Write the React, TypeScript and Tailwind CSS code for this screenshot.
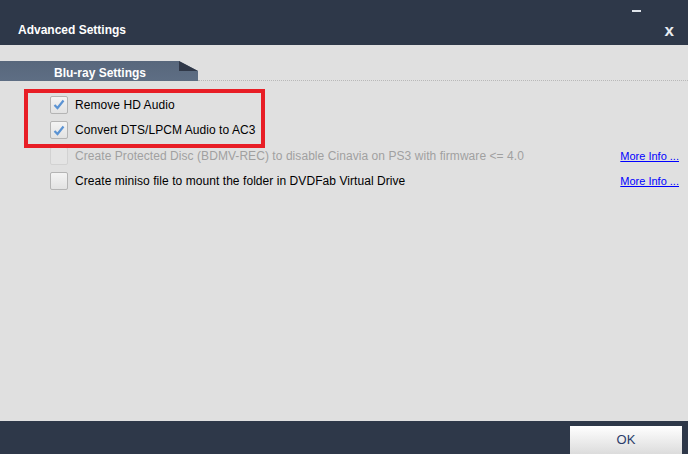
const font = { fontFamily: '"Liberation Sans", Arial, sans-serif' };

function Check({ checked, disabled }: { checked?: boolean; disabled?: boolean }) {
  return (
    <span
      className={
        "flex h-[18px] w-[18px] shrink-0 items-center justify-center rounded-[2px] border " +
        (disabled
          ? "border-[#d2d2d2] bg-[#e4e4e4]"
          : "border-[#b4b4b4] bg-gradient-to-b from-[#f4f4f4] to-[#e2e2e2]")
      }
    >
      {checked && (
        <svg width="12" height="11" viewBox="0 0 12 11">
          <path d="M1.5 6 L4.5 9 L10.5 1.5" fill="none" stroke="#5b93d3" strokeWidth="2.2" />
        </svg>
      )}
    </span>
  );
}

function Row({
  label,
  checked,
  disabled,
  more,
}: {
  label: string;
  checked?: boolean;
  disabled?: boolean;
  more?: boolean;
}) {
  return (
    <div className="flex h-[25.5px] items-center pl-[50px] pr-[9px]">
      <Check checked={checked} disabled={disabled} />
      <span
        className={
          "ml-[7px] text-[12px] tracking-[0.06px] " + (disabled ? "text-[#a0a0a0]" : "text-black")
        }
      >
        {label}
      </span>
      {more && <a className="ml-auto text-[11px] text-[#0000ff] underline">More Info ...</a>}
    </div>
  );
}

export default function App() {
  return (
    <div className="flex h-[454px] w-[688px] flex-col bg-[#e0e0e0]" style={font}>
      <div className="relative h-[45px] bg-[#2e3849] pl-[18px] pt-[17px]">
        <span className="text-[12px] font-bold leading-[14px] text-white">Advanced Settings</span>
        <span className="absolute left-[632px] top-[10px] h-[2px] w-[9px] bg-[#dfe4ea]" />
        <span className="absolute right-[14px] top-[18px] text-[17px] font-bold text-[#e8ecf0]">x</span>
      </div>

      <div className="flex-1 pt-[16px]">
        <div className="flex items-end">
          <div className="relative flex h-[20px] w-[198px] items-center justify-center bg-gradient-to-b from-[#58677c] to-[#5e6e84] pt-[3px] pl-[2px]">
            <span className="text-[12px] font-bold text-white">Blu-ray Settings</span>
            <svg className="absolute right-0 top-0" width="19" height="10" viewBox="0 0 19 10">
              <polygon points="0,0 19,10 19,0" fill="#e0e0e0" />
              <polygon points="0,0 19,10 0,10" fill="#303848" />
            </svg>
          </div>
          <div className="flex-1 border-b border-dotted border-[#b8b8b8]" />
        </div>

        <div className="relative mt-[8px]">
          <div className="pointer-events-none absolute left-[24px] top-[0px] h-[59px] w-[241px] border-[4px] border-[#e81e26]" />
          <div className="pt-[3px]">
            <Row label="Remove HD Audio" checked />
            <Row label="Convert DTS/LPCM Audio to AC3" checked />
            <Row
              label="Create Protected Disc (BDMV-REC) to disable Cinavia on PS3 with firmware <= 4.0"
              disabled
              more
            />
            <Row label="Create miniso file to mount the folder in DVDFab Virtual Drive" more />
          </div>
        </div>
      </div>

      <div className="flex h-[33px] items-end justify-end bg-[#2e3849] pr-[6px]">
        <button className="flex h-[28px] w-[112px] items-center justify-center bg-gradient-to-b from-white to-[#dcdcdc] text-[13px] text-[#2a3c6a]">
          OK
        </button>
      </div>
    </div>
  );
}
